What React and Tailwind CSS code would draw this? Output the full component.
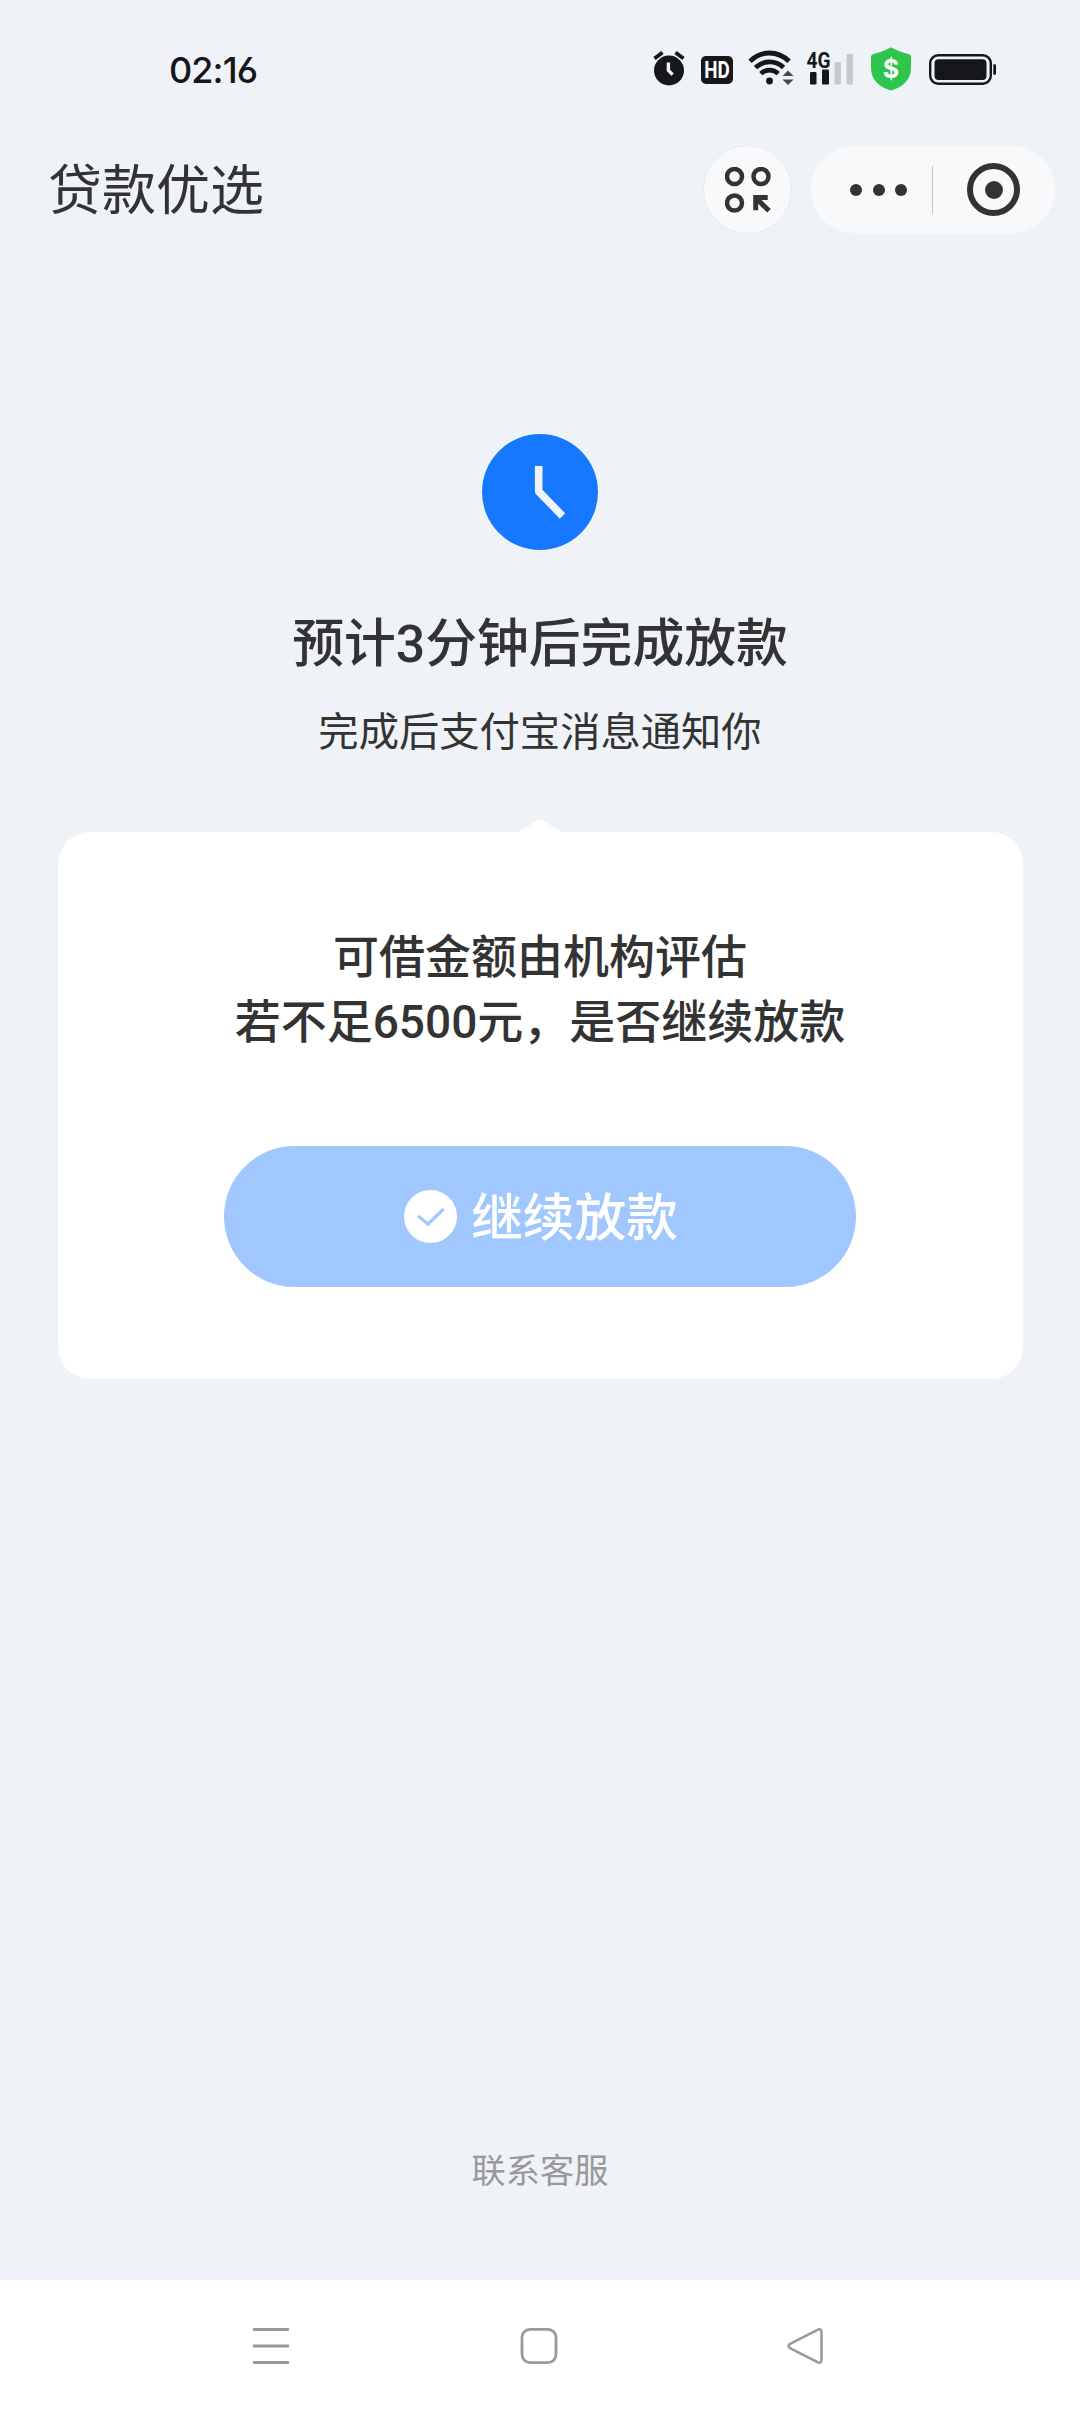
function AlarmIcon() {
  return (
    <svg width="32" height="36" viewBox="0 0 32 36" fill="none">
      <circle cx="16" cy="20.5" r="15" fill="#15171a" />
      <path d="M1.5 8.6L9.5 2.6M22.5 2.6l8 6" stroke="#15171a" strokeWidth="3.8" />
      <path d="M15.4 12.5v7.8l4.2 4.4" stroke="#eff3f8" strokeWidth="3.4" />
    </svg>
  );
}

function WifiIcon() {
  return (
    <svg width="46" height="36" viewBox="0 0 46 36" fill="none">
      <path d="M2 11.2C13.5.2 29.5.2 41 11.2" stroke="#15171a" strokeWidth="5" />
      <path d="M7.4 17.6c8-7.6 20.2-7.6 28.2 0" stroke="#15171a" strokeWidth="4.8" />
      <path d="M12.8 23.6c5-4.7 12.4-4.7 17.4 0" stroke="#15171a" strokeWidth="4.6" />
      <circle cx="21.5" cy="31" r="3.4" fill="#15171a" />
      <path d="M34.5 26l5.5-5.5 5.5 5.5zM34.5 29.5l5.5 5.5 5.5-5.5z" fill="#46494d" />
    </svg>
  );
}

function SignalIcon() {
  return (
    <svg className="overflow-visible" width="48" height="40" viewBox="0 -4 48 40">
      <text
        x="0.5"
        y="17.5"
        fontSize="21.5"
        fontWeight="700"
        textLength="24"
        lengthAdjust="spacingAndGlyphs"
        fill="#15171a"
        className="font-['Roboto','Noto_Sans',sans-serif]"
      >
        4G
      </text>
      <rect x="4" y="22" width="6.5" height="12.5" rx="1.2" fill="#15171a" />
      <rect x="16" y="19.5" width="7" height="15" rx="1.2" fill="#15171a" />
      <rect x="28.5" y="12" width="6.5" height="22.5" rx="1.2" fill="#c7cacd" />
      <rect x="40.5" y="4" width="6.5" height="30.5" rx="1.2" fill="#c7cacd" />
    </svg>
  );
}

function ShieldIcon() {
  return (
    <svg width="40" height="44" viewBox="0 0 40 44">
      <path d="M20 .5C21.5.5 23 3 38 7.2q2 .6 2 2.6v11C40 33 32 40 20 43.5 8 40 0 33 0 20.8v-11q0-2 2-2.6C17 3 18.5.5 20 .5z" fill="#2dc54c" />
      <text x="20" y="31" fontSize="25" fontWeight="700" textAnchor="middle" fill="#fff" className="font-['Inter','Noto_Sans',sans-serif]">
        $
      </text>
    </svg>
  );
}

function BatteryIcon() {
  return (
    <svg width="68" height="32" viewBox="0 0 68 32">
      <rect x="1.2" y="1.2" width="60.6" height="28.6" rx="8" fill="none" stroke="#15171a" strokeWidth="2.4" />
      <rect x="5.5" y="5.2" width="52" height="20.8" rx="4" fill="#15171a" />
      <path d="M64.3 10.2h1.4q1.3 0 1.3 1.3v8q0 1.3-1.3 1.3h-1.4z" fill="#15171a" />
    </svg>
  );
}

function StatusBar() {
  return (
    <div className="flex h-[138px] items-start pl-[169px] pr-[83px] text-[#15171a]">
      <span className="mt-[47px] font-['Inter','Noto_Sans',sans-serif] text-[36px] font-medium leading-[46px] tracking-[-0.9px] [font-feature-settings:'ss01']">
        02:16
      </span>
      <div className="ml-auto mt-[50px] flex h-9 items-start">
        <AlarmIcon />
        <span className="ml-4 mt-[6px] flex h-7 w-8 items-center justify-center rounded-[5px] bg-[#15171a] font-['Roboto','Noto_Sans',sans-serif] text-[23.5px] font-bold leading-7 text-white">
          <span className="inline-block scale-x-[0.8]">HD</span>
        </span>
        <span className="ml-[15px]"><WifiIcon /></span>
        <span className="-mt-1 ml-3"><SignalIcon /></span>
        <span className="-mt-[3px] ml-[17px]"><ShieldIcon /></span>
        <span className="ml-[18px] mt-1"><BatteryIcon /></span>
      </div>
    </div>
  );
}

function Header() {
  return (
    <header className="flex h-[103px] items-center pl-[48px] pr-[24px]">
      <h1 className="pt-[4px] text-[54px] leading-[78px] text-[#333]">贷款优选</h1>

      <button className="ml-auto flex size-[89px] items-center justify-center rounded-full border border-[#e9ebf0] bg-[#f8f9fb]">
        <svg width="46" height="46" viewBox="0 0 46 46" fill="none" stroke="#333" strokeWidth="4.5">
          <circle cx="9.5" cy="9.5" r="7.5" />
          <circle cx="36" cy="9.5" r="7.5" />
          <circle cx="9.5" cy="36" r="7.5" />
          <path d="M30.7 43.2V30.5h12M31 31l13 12.8" strokeWidth="5" />
        </svg>
      </button>

      <div className="ml-[18px] flex h-[89px] w-[246px] items-center rounded-full border border-[#f3f4f7] bg-[#f8f9fb]">
        <div className="ml-[39px] flex gap-[10.5px]">
          <span className="size-3 rounded-full bg-[#333]" />
          <span className="size-3 rounded-full bg-[#333]" />
          <span className="size-3 rounded-full bg-[#333]" />
        </div>
        <span className="ml-[25px] h-12 w-px bg-[#c4c5c8]" />
        <span className="ml-[34px] flex size-[53px] items-center justify-center rounded-full border-[6px] border-[#333]">
          <span className="size-[18px] rounded-full bg-[#333]" />
        </span>
      </div>
    </header>
  );
}

function NavBar() {
  return (
    <nav className="flex h-[132px] items-center bg-white pl-[252px]">
      <svg width="38" height="38" viewBox="0 0 38 38" stroke="#999" strokeWidth="3">
        <path d="M1 2.5h36M1 19h36M1 35.5h36" />
      </svg>
      <svg className="ml-[230px]" width="38" height="38" viewBox="0 0 38 38" fill="none" stroke="#999" strokeWidth="2.8">
        <rect x="2" y="2.4" width="34" height="33.2" rx="8" />
      </svg>
      <svg className="ml-[229px]" width="38" height="38" viewBox="0 0 38 38" fill="none" stroke="#999" strokeWidth="2.5" strokeLinejoin="round">
        <path d="M3 16.8L30.5 2.8q4-1.6 4 2.2v28q0 3.8-4 2.2L3 21.2q-3-2.2 0-4.4z" />
      </svg>
    </nav>
  );
}

export default function App() {
  return (
    <div className="flex h-[2412px] w-[1080px] flex-col overflow-hidden bg-[#eff3f8] font-['Roboto','Noto_Sans_CJK_SC',sans-serif] text-[#333]">
      <StatusBar />
      <Header />

      <main className="flex flex-1 flex-col items-center">
        <svg className="mt-[193px]" width="116" height="116" viewBox="0 0 116 116" fill="none">
          <circle cx="58" cy="58" r="58" fill="#1677ff" />
          <path d="M56.7 32v25.5L80.5 82" stroke="#eff3f8" strokeWidth="7.6" strokeLinejoin="round" />
        </svg>

        <h2 className="mt-[57px] text-[51.8px] font-medium leading-[76px]">预计3分钟后完成放款</h2>
        <p className="mt-5 text-[40.3px] leading-[60px]">完成后支付宝消息通知你</p>

        {/* pointer above the card */}
        <svg className="mt-[56px]" width="48" height="13" viewBox="0 0 48 13" fill="#fff">
          <path d="M0 13q3 0 6-2L20.5 1.5q3.5-2.5 7 0L42 11q3 2 6 2z" />
        </svg>
        <section className="flex h-[547px] w-[965px] flex-col items-center rounded-[32px] bg-white">
          <p className="mt-[93px] text-center text-[46px] font-medium leading-[65px]">
            可借金额由机构评估
            <br />
            若不足6500元，是否继续放款
          </p>
          <button className="mt-[91px] flex h-[141px] w-[632px] items-center justify-center rounded-full bg-[#a1c7ff] pl-[2px] text-[51.7px] font-medium leading-[76px] text-white">
            <svg className="mr-[14px]" width="53" height="53" viewBox="0 0 53 53" fill="none">
              <circle cx="26.5" cy="26.5" r="26.5" fill="#fff" />
              <path d="M14 26l10 8L39.5 19" stroke="#a1c7ff" strokeWidth="3.2" />
            </svg>
            <span className="pt-[4px]">继续放款</span>
          </button>
        </section>

        <a className="mb-[84px] mt-auto text-[34.2px] leading-[50px] text-[#999]">联系客服</a>
      </main>

      <NavBar />
    </div>
  );
}
